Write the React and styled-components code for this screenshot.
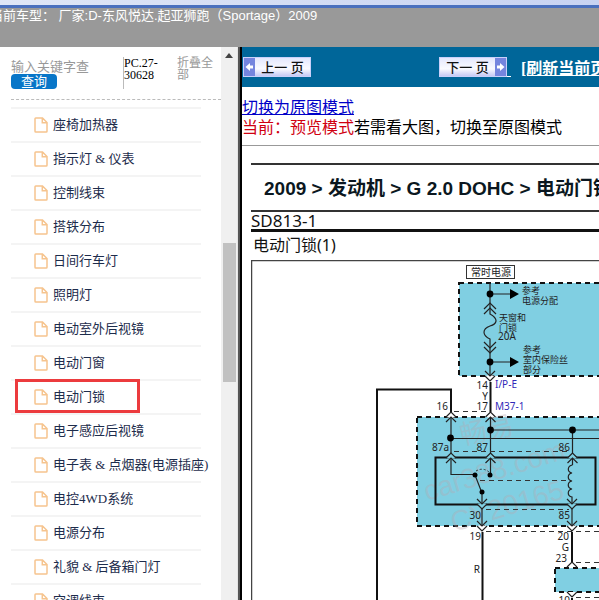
import React from "react";
import styled, { createGlobalStyle } from "styled-components";

const song = '"Liberation Serif", "Noto Sans CJK SC", serif';
const hei = '"Liberation Sans", "Noto Sans CJK SC", sans-serif';

const GlobalStyle = createGlobalStyle`
  * { box-sizing: border-box; }
  body { margin: 0; background: #fff; font-family: ${song}; color: #000; overflow: hidden; }
`;

const Page = styled.div`
  display: flex;
  flex-direction: column;
  height: 100vh;
  overflow: hidden;
`;

const WindowEdge = styled.div`
  flex: none;
  height: 8px;
  background: linear-gradient(90deg, #dfe6f6, #c8d3f2);
  border-bottom: 3px solid #4a70be;
`;

const Header = styled.header`
  flex: none;
  display: flex;
  height: 39px;
  background: #999;
  color: #fff;
  font: 13px/16px ${hei};
  white-space: pre;
`;

const Vehicle = styled.h1`
  margin: 0 0 0 -10px;
  font-size: inherit;
  font-weight: 400;
`;

const Body = styled.div`
  flex: 1;
  display: flex;
  min-height: 0;
`;

const Sidebar = styled.aside`
  flex: none;
  width: 221px;
  overflow: hidden;
  padding-left: 11px;
`;

const Search = styled.form`
  display: flex;
  align-items: flex-start;
  height: 53px;
  padding-top: 10px;
  border-bottom: 1px dashed #bbb;
`;

const SearchField = styled.div`
  width: 112px;
  display: flex;
  flex-direction: column;
  align-items: flex-start;
`;

const Keyword = styled.input`
  width: 100px;
  height: 17px;
  padding: 2px 0 0;
  border: 0;
  outline: 0;
  background: transparent;
  font: 13px/15px ${song};
  &::placeholder { color: #999; opacity: 1; }
`;

const SearchButton = styled.button`
  width: 46px;
  height: 15px;
  padding: 0;
  border: 0;
  border-radius: 4px;
  background: #0876c8;
  color: #fff;
  font: 13px/14px ${song};
`;

const Code = styled.span`
  width: 54px;
  height: 32px;
  border-left: 1px solid #bbb;
  font-size: 12px;
  line-height: 12px;
`;

const Collapse = styled.a`
  width: 40px;
  color: #999;
  font-size: 12px;
  line-height: 12px;
  text-decoration: none;
`;

const List = styled.ul`
  list-style: none;
  margin: 7px 20px 0 0;
  padding: 0;
  border-top: 2px solid #f4f4f4;
`;

const Row = styled.li`
  position: relative;
  height: 34px;
  border-bottom: 2px solid #f4f4f4;
`;

const RowLink = styled.a`
  display: flex;
  align-items: center;
  gap: 5px;
  height: 32px;
  padding-left: 23px;
  color: #1d2c4c;
  font-size: 13px;
  line-height: 18px;
  white-space: nowrap;
  text-decoration: none;
`;

const FileMark = styled.svg`
  flex: none;
`;

const Highlight = styled.span`
  position: absolute;
  inset: -2px 61px 0 4px;
  border: 3px solid #ec3b3e;
  pointer-events: none;
`;

const Scroll = styled.div`
  flex: none;
  width: 16px;
  display: flex;
  flex-direction: column;
  align-items: center;
  background: #f0f0f0;
`;

const ScrollUp = styled.button`
  display: flex;
  align-items: center;
  justify-content: center;
  width: 16px;
  height: 17px;
  padding: 0;
  border: 0;
  background: transparent;
`;

const ScrollGap = styled.div`
  flex: 179 0 0;
`;

const ScrollThumb = styled.div`
  flex: 139 0 0;
  width: 13px;
  background: #c1c1c1;
`;

const ScrollRest = styled.div`
  flex: 218 0 0;
`;

const Divider = styled.div`
  flex: none;
  width: 5px;
  background: #555;
  border-left: 1px solid #e4e4e4;
  border-right: 2px solid #000;
`;

const Main = styled.main`
  flex: 1;
  min-width: 0;
  overflow: hidden;
`;

const Toolbar = styled.nav`
  display: flex;
  align-items: center;
  height: 40px;
  padding-left: 1px;
  background: #069;
  overflow: hidden;
`;

const PageButton = styled.button`
  flex: none;
  display: flex;
  align-items: center;
  width: 68px;
  height: 20px;
  padding: 0;
  border: 1px solid #c9d0fa;
  background: linear-gradient(#e4e7fd, #fafaff 60%, #c5c9f4);
  color: #111;
  font: 500 13px/17px ${hei};
  white-space: nowrap;
`;

const PageLabel = styled.span`
  flex: 1;
  text-align: center;
`;

const ArrowBox = styled.span`
  display: flex;
  align-items: center;
  justify-content: center;
  width: 11px;
  height: 18px;
  background: #7585de;
`;

const Spacer = styled.span`
  flex: none;
  width: 128px;
`;

const LinkTail = styled.span`
  flex: none;
  width: 4px;
  height: 20px;
  border-bottom: 1px solid #fff;
`;

const Refresh = styled.a`
  flex: none;
  align-self: flex-end;
  margin: 0 0 8px 10px;
  color: #fff;
  font-size: 16px;
  font-weight: 700;
  line-height: 20px;
`;

const Modes = styled.section`
  padding: 11px 0 7px;
  border-bottom: 1px solid #999;
  font-size: 16px;
  line-height: 20px;
  white-space: nowrap;
`;

const ModeLine = styled.p`
  margin: 0;
`;

const ModeLink = styled.a`
  color: #0000c8;
`;

const Current = styled.span`
  color: #d00010;
`;

const Sheet = styled.article`
  margin: 17px 0 0 9px;
  border-top: 2px solid #333;
  white-space: nowrap;
  overflow: hidden;
`;

const SheetTitle = styled.h2`
  margin: 0;
  padding-left: 13px;
  height: 45px;
  color: #0b1720;
  font: 700 19px/47px ${hei};
`;

const SheetCode = styled.div`
  height: 22px;
  border-top: 2px solid #333;
  border-bottom: 3px solid #111;
  color: #111;
  font: 17px/18px "Noto Sans", "Noto Sans CJK SC", sans-serif;
`;

const SheetName = styled.div`
  height: 28px;
  padding-left: 2px;
  color: #111;
  font: 16px/27px "Noto Sans", "Noto Sans CJK SC", sans-serif;
`;

const Drawing = styled.svg`
  display: block;
  font-family: "Noto Sans", "Noto Sans CJK SC", sans-serif;
`;

const items = [
  "座椅加热器", "指示灯 & 仪表", "控制线束", "搭铁分布", "日间行车灯", "照明灯",
  "电动室外后视镜", "电动门窗", "电动门锁", "电子感应后视镜", "电子表 & 点烟器(电源插座)",
  "电控4WD系统", "电源分布", "礼貌 & 后备箱门灯", "空调线束",
];

function FileIcon() {
  return (
    <FileMark width="14" height="16" viewBox="0 0 14 16" fill="none" stroke="#f6c48e" strokeWidth="1.5" aria-hidden="true">
      <path d="M1.8 1H8.5L13 5.5V14.2Q13 15 12.2 15H1.8Q1 15 1 14.2V1.8Q1 1 1.8 1Z M8.3 1V5.7H13" />
    </FileMark>
  );
}

function Arrow({ right }) {
  return (
    <ArrowBox>
      <svg width="9" height="10" viewBox="0 0 9 10" fill="#fff" aria-hidden="true">
        <path d={right ? "M1 3.5H4V1L8.5 5L4 9V6.5H1Z" : "M8 3.5H5V1L.5 5L5 9V6.5H8Z"} />
      </svg>
    </ArrowBox>
  );
}

function Dot({ x, y, r = 3.4 }) {
  return <circle cx={x} cy={y} r={r} fill="#000" />;
}

function Connector({ x, y, down, fill = "#fff" }) {
  const s = down ? 1 : -1;
  return (
    <g stroke="#222" strokeWidth="1.2">
      <path d={`M${x - 5} ${y}L${x} ${y + 5 * s}L${x + 5} ${y}L${x} ${y - s}Z`} fill={fill} stroke="none" />
      <path d={`M${x - 5} ${y}L${x} ${y + 5 * s}L${x + 5} ${y}M${x - 5} ${y - 5 * s}L${x} ${y}L${x + 5} ${y - 5 * s}`} fill="none" />
    </g>
  );
}

function Wiring() {
  const water = "#80cfe2";
  return (
    <Drawing width="348" height="340" viewBox="251 260 348 340" role="img" aria-label="电动门锁(1)">
      <path d="M600 260.5H251.500V600" fill="none" stroke="#444" strokeWidth="1.5" />
      <rect x="466.500" y="265.500" width="48" height="13" fill="#fff" stroke="#333" />
      <g fill={water} stroke="#111" strokeWidth="2" strokeDasharray="5 4">
        <rect x="459" y="283" width="160" height="93" />
        <rect x="417" y="417" width="200" height="109" />
        <rect x="555" y="568" width="60" height="24" />
      </g>
      <g fill="#b8a9b0" fillOpacity=".36" fontFamily="Liberation Sans, Noto Sans CJK SC, sans-serif">
        <text x="462" y="445" fontSize="27" transform="rotate(-12 462 445)">畅易</text>
        <text x="427" y="501" fontSize="28" transform="rotate(-17 427 501)">car388.com</text>
        <text x="454" y="532" fontSize="28" transform="rotate(-17 454 532)">CY20165</text>
      </g>
      <g fill="none" stroke="#222" strokeWidth="1.2">
        <path d="M490 283V314C499 319 497 324 490 326C482 329 482 335 490 339V376M490 294H514M490 362H514" />
        <path d="M451 417V474.500H475M490.500 417V475M490 430H600M450 438.500H600M572.500 430V465" />
        <path d="M475 475L482 493V526M572.500 465C567 466 567 472 572 473C567 474 567 480 572 481C567 482 567 488 572 489C567 490 567 496 572 497V526" />
        <path d="M484 314L490 308L496 314M484 309L490 303L496 309M484 342L490 348L496 342M484 347L490 353L496 347" />
      </g>
      <path d="M377 600V389.500H451V412M490.500 382V412M482.500 532V600M572 532V562M572 598V600" fill="none" stroke="#111" strokeWidth="2" />
      <rect x="435.500" y="457.500" width="160" height="47" fill="none" stroke="#111" strokeWidth="2" />
      <g fill="none" stroke="#333" strokeDasharray="5 4">
        <path d="M454 411.500H488M454 451.500H570M480 480.500H568M486 509.500H569M486 531.500H600M576 562.500H600M576 597.500H600" />
        <path d="M476 471Q483 467 489 472" strokeDasharray="2 2" />
      </g>
      <path d="M510 289L519 294L510 299ZM510 357L519 362L510 367Z" fill="#000" />
      <Dot x={490} y={294} /><Dot x={490} y={362} /><Dot x={490.5} y={430} />
      <Dot x={450.5} y={438} /><Dot x={572.5} y={430} />
      <Dot x={475} y={475} r={2.5} /><Dot x={490} y={475} r={2.5} /><Dot x={482} y={492} r={2.5} />
      <Connector x={490} y={376} down /><Connector x={451} y={417} /><Connector x={490.5} y={417} />
      <Connector x={451} y={458} fill={water} /><Connector x={490.5} y={458} fill={water} /><Connector x={572.5} y={458} fill={water} />
      <Connector x={482} y={504} down fill={water} /><Connector x={572} y={504} down fill={water} />
      <Connector x={482} y={526} down /><Connector x={572} y={526} down />
      <path d="M567 567L572 562L577 567M567 592L572 597L577 592" fill="#fff" stroke="#222" strokeWidth="1.2" />
      <g fill="#222" fontSize="10">
        <text x="471" y="276">常时电源</text>
        <g fontSize="9">
          <text x="522" y="294">参考</text><text x="522" y="304">电源分配</text>
          <text x="499" y="321">天窗和</text><text x="499" y="331">门锁</text><text x="498" y="340" fontSize="10">20A</text>
          <text x="523" y="353">参考</text><text x="523" y="363">室内保险丝</text><text x="523" y="373">部分</text>
        </g>
        <g textAnchor="end">
          <text x="488" y="389">14</text><text x="488" y="400">Y</text><text x="488" y="410">17</text><text x="448" y="410">16</text>
          <text x="449" y="451">87a</text><text x="488" y="451">87</text><text x="570" y="451">86</text>
          <text x="481" y="519">30</text><text x="570" y="519">85</text><text x="481" y="540">19</text>
          <text x="569" y="540">20</text><text x="569" y="551">G</text><text x="567" y="562">23</text>
          <text x="480" y="573">R</text><text x="570" y="604">10</text>
        </g>
        <g fill="#3128b8"><text x="495" y="388">I/P-E</text><text x="495" y="410">M37-1</text></g>
      </g>
    </Drawing>
  );
}

export default function App() {
  return (
    <Page>
      <GlobalStyle />
      <WindowEdge />
      <Header><Vehicle>当前车型： 厂家:D-东风悦达.起亚狮跑（Sportage）2009</Vehicle></Header>
      <Body>
        <Sidebar>
          <Search onSubmit={(e) => e.preventDefault()}>
            <SearchField>
              <Keyword aria-label="输入关键字查" placeholder="输入关键字查" />
              <SearchButton>查询</SearchButton>
            </SearchField>
            <Code>PC.27-<br />30628</Code>
            <Collapse href="#collapse">折叠全部</Collapse>
          </Search>
          <List>
            {items.map((name) => (
              <Row key={name}>
                <RowLink href="#item"><FileIcon />{name}</RowLink>
                {name === "电动门锁" && <Highlight />}
              </Row>
            ))}
          </List>
        </Sidebar>
        <Scroll>
          <ScrollUp aria-label="向上">
            <svg width="8" height="5" viewBox="0 0 8 5" aria-hidden="true"><path d="M0 5L4 0L8 5Z" fill="#444" /></svg>
          </ScrollUp>
          <ScrollGap /><ScrollThumb /><ScrollRest />
        </Scroll>
        <Divider />
        <Main>
          <Toolbar>
            <PageButton><Arrow /><PageLabel>上一 页</PageLabel></PageButton>
            <Spacer />
            <PageButton><PageLabel>下一 页</PageLabel><Arrow right /></PageButton>
            <LinkTail />
            <Refresh href="#refresh">[刷新当前页]</Refresh>
          </Toolbar>
          <Modes>
            <ModeLine><ModeLink href="#original">切换为原图模式</ModeLink></ModeLine>
            <ModeLine><Current>当前：预览模式</Current>若需看大图，切换至原图模式</ModeLine>
          </Modes>
          <Sheet>
            <SheetTitle>2009 &gt; 发动机 &gt; G 2.0 DOHC &gt; 电动门锁</SheetTitle>
            <SheetCode>SD813-1</SheetCode>
            <SheetName>电动门锁(1)</SheetName>
            <Wiring />
          </Sheet>
        </Main>
      </Body>
    </Page>
  );
}
